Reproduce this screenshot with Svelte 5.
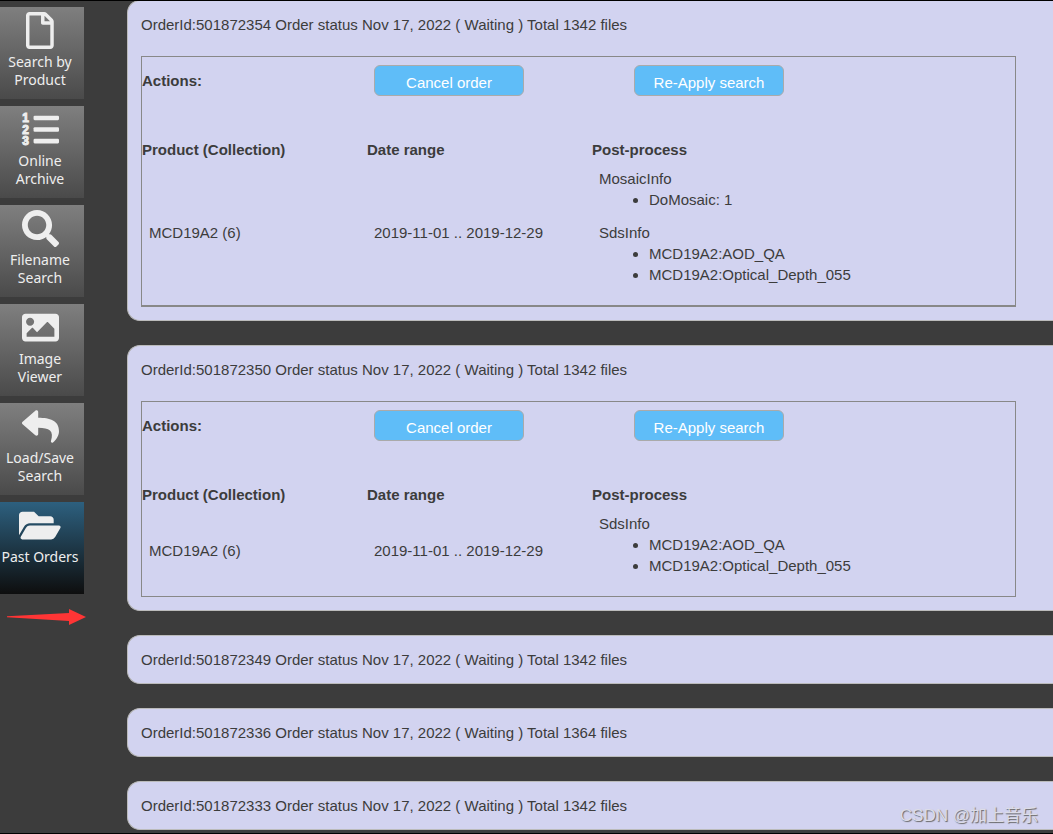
<script lang="ts">
  type Process = { name: string; items: string[] };

  interface Order {
    id: number;
    date: string;
    status: string;
    files: number;
    product?: string;
    range?: string;
    processes?: Process[];
  }

  const sds: Process = {
    name: 'SdsInfo',
    items: ['MCD19A2:AOD_QA', 'MCD19A2:Optical_Depth_055'],
  };

  const orders: Order[] = [
    {
      id: 501872354,
      date: 'Nov 17, 2022',
      status: 'Waiting',
      files: 1342,
      product: 'MCD19A2 (6)',
      range: '2019-11-01 .. 2019-12-29',
      processes: [{ name: 'MosaicInfo', items: ['DoMosaic: 1'] }, sds],
    },
    {
      id: 501872350,
      date: 'Nov 17, 2022',
      status: 'Waiting',
      files: 1342,
      product: 'MCD19A2 (6)',
      range: '2019-11-01 .. 2019-12-29',
      processes: [sds],
    },
    { id: 501872349, date: 'Nov 17, 2022', status: 'Waiting', files: 1342 },
    { id: 501872336, date: 'Nov 17, 2022', status: 'Waiting', files: 1364 },
    { id: 501872333, date: 'Nov 17, 2022', status: 'Waiting', files: 1342 },
  ];

  const tabs = [
    { label: 'Search by Product', icon: 'file' },
    { label: 'Online Archive', icon: 'list' },
    { label: 'Filename Search', icon: 'search' },
    { label: 'Image Viewer', icon: 'image' },
    { label: 'Load/Save Search', icon: 'reply' },
    { label: 'Past Orders', icon: 'folder' },
  ];

  const paths: Record<string, string> = {
    file: 'M369.9 97.9L286 14C277 5 264.8-.1 252.1-.1H48C21.5 0 0 21.5 0 48v416c0 26.5 21.5 48 48 48h288c26.5 0 48-21.5 48-48V131.9c0-12.7-5.1-25-14.1-34zM332.1 128H256V51.9l76.1 76.1zM48 464V48h160v104c0 13.3 10.7 24 24 24h104v288H48z',
    search:
      'M505 442.7L405.3 343c-4.5-4.5-10.6-7-17-7H372c27.6-35.3 44-79.7 44-128C416 93.1 322.9 0 208 0S0 93.1 0 208s93.1 208 208 208c48.3 0 92.7-16.4 128-44v16.3c0 6.4 2.5 12.5 7 17l99.7 99.7c9.4 9.4 24.6 9.4 33.9 0l28.3-28.3c9.4-9.4 9.4-24.6.1-34zM208 336c-70.7 0-128-57.2-128-128 0-70.7 57.2-128 128-128 70.7 0 128 57.2 128 128 0 70.7-57.2 128-128 128z',
    image:
      'M464 448H48c-26.51 0-48-21.49-48-48V112c0-26.51 21.49-48 48-48h416c26.51 0 48 21.49 48 48v288c0 26.51-21.49 48-48 48zM112 120c-30.928 0-56 25.072-56 56s25.072 56 56 56 56-25.072 56-56-25.072-56-56-56zM64 384h384V272l-87.515-87.515c-4.686-4.686-12.284-4.686-16.971 0L208 320l-55.515-55.515c-4.686-4.686-12.284-4.686-16.971 0L64 336v48z',
    reply:
      'M8.309 189.836L184.313 37.851C199.719 24.546 224 35.347 224 56.015v80.053c160.629 1.839 288 34.032 288 186.258 0 61.441-39.581 122.309-83.333 154.132-13.653 9.931-33.111-2.533-28.077-18.631 45.344-145.012-21.507-183.51-176.59-185.742V360c0 20.7-24.3 31.453-39.687 18.164l-176.004-152c-11.071-9.562-11.086-26.753 0-36.328z',
    folder:
      'M572.694 292.093L500.27 416.248A63.997 63.997 0 0 1 444.989 448H45.025c-18.523 0-30.064-20.093-20.731-36.093l72.424-124.155A64 64 0 0 1 152 256h399.964c18.523 0 30.064 20.093 20.73 36.093zM152 224h328v-48c0-26.51-21.49-48-48-48H272l-64-64H48C21.49 64 0 85.49 0 112v278.046l69.077-118.418C86.214 242.25 117.989 224 152 224z',
  };

  const widths: Record<string, number> = { file: 384, folder: 576 };

  let active = $state('Past Orders');
</script>

<div class="page">
  <nav class="sidebar">
    {#each tabs as tab}
      <button class="tab" class:active={active === tab.label} onclick={() => (active = tab.label)}>
        <svg class="icon" viewBox="0 0 {widths[tab.icon] ?? 512} 512" aria-hidden="true">
          {#if tab.icon === 'list'}
            <text x="4" y="158">1</text>
            <text x="4" y="316">2</text>
            <text x="4" y="474">3</text>
            <rect x="160" y="64" width="352" height="64" rx="16" />
            <rect x="160" y="224" width="352" height="64" rx="16" />
            <rect x="160" y="384" width="352" height="64" rx="16" />
          {:else}
            <path d={paths[tab.icon]} />
          {/if}
        </svg>
        <span>{tab.label}</span>
      </button>
    {/each}
    <svg class="pointer" viewBox="0 0 79 16" aria-hidden="true">
      <path d="M0 7.3L62 4V0L79 8L62 16V12L0 8.3z" />
    </svg>
  </nav>

  <main class="orders">
    {#each orders as order}
      <section class="order">
        <div class="summary">
          OrderId:{order.id} Order status {order.date} ( {order.status} ) Total {order.files} files
        </div>
        {#if order.processes}
          <div class="details">
            <div class="actions">
              <strong>Actions:</strong>
              <button class="action">Cancel order</button>
              <button class="action">Re-Apply search</button>
            </div>
            <table>
              <thead>
                <tr>
                  <th class="narrow">Product (Collection)</th>
                  <th class="narrow">Date range</th>
                  <th>Post-process</th>
                </tr>
              </thead>
              <tbody>
                <tr>
                  <td>{order.product}</td>
                  <td>{order.range}</td>
                  <td>
                    {#each order.processes as process}
                      <div>{process.name}</div>
                      <ul>
                        {#each process.items as item}
                          <li>{item}</li>
                        {/each}
                      </ul>
                    {/each}
                  </td>
                </tr>
              </tbody>
            </table>
          </div>
        {/if}
      </section>
    {/each}
  </main>

  <div class="watermark">CSDN @加上音乐</div>
</div>

<style>
  :global(body) {
    background: #3c3c3c;
  }

  .page {
    position: relative;
    display: flex;
    box-sizing: border-box;
    min-height: 100vh;
    background: #3c3c3c;
    color: #3c3c3c;
    font-family: 'Liberation Sans', Arial, sans-serif;
    font-size: 15px;
    line-height: 21px;
    overflow: hidden;
  }

  .page::before,
  .page::after {
    content: '';
    position: absolute;
    left: 0;
    right: 0;
    height: 1px;
    background: #000;
  }

  .page::before {
    top: 0;
  }

  .page::after {
    bottom: 0;
  }

  .sidebar {
    display: flex;
    flex-direction: column;
    gap: 7px;
    flex: 0 0 127px;
    padding-top: 7px;
  }

  .tab {
    display: flex;
    flex-direction: column;
    align-items: center;
    gap: 4px;
    box-sizing: border-box;
    width: 84px;
    height: 92px;
    padding: 5px 4px 0 0;
    border: none;
    background: linear-gradient(#7f7f7f, #4a4a4a);
    color: #eee;
    font-family: 'Noto Sans', sans-serif;
    font-size: 14px;
    line-height: 18px;
    cursor: pointer;
  }

  .tab.active {
    background: linear-gradient(#2d607f, #0e0e0e);
  }

  .icon {
    flex: none;
    height: 37px;
    fill: #eee;
    overflow: visible;
  }

  .icon text {
    font-family: 'Liberation Sans', sans-serif;
    font-size: 165px;
    font-weight: 700;
    stroke: #eee;
    stroke-width: 14px;
  }

  .pointer {
    width: 79px;
    margin: 8px 0 0 7px;
    fill: #ff3535;
  }

  .orders {
    display: flex;
    flex-direction: column;
    gap: 24px;
    flex: 1;
    min-width: 0;
    padding-bottom: 4px;
  }

  .order {
    padding: 13px 37px 13px 13px;
    border: 1px solid #bbb;
    border-right: none;
    border-radius: 13px 0 0 13px;
    background: #d2d3f0;
  }

  .details {
    margin-top: 21px;
    border: 1px solid #888;
  }

  .order:first-child .details {
    border-bottom-width: 2px;
  }

  .actions {
    display: flex;
    align-items: center;
    padding: 8px 0 43px;
  }

  .actions strong {
    width: 232px;
  }

  .action {
    width: 150px;
    height: 31px;
    margin-right: 110px;
    padding: 4px 0 0;
    border: 1px solid #aaa;
    border-radius: 6px;
    background: #5fbdf8;
    color: #fff;
    font-family: inherit;
    font-size: 15px;
    cursor: pointer;
  }

  .action:hover {
    background: #48aeee;
  }

  table {
    width: 100%;
    border-collapse: collapse;
    table-layout: fixed;
  }

  th {
    padding: 0;
    text-align: left;
  }

  .narrow {
    width: 225px;
  }

  td {
    padding: 8px 7px;
    vertical-align: middle;
  }

  ul {
    margin: 0 0 12px;
    padding-left: 50px;
  }

  .watermark {
    position: absolute;
    right: 15px;
    bottom: 8px;
    color: #dcdce8;
    font-family: 'Liberation Sans', 'Noto Sans CJK SC', sans-serif;
    font-size: 17px;
    text-shadow: 1px 1px 1px #666;
  }
</style>
